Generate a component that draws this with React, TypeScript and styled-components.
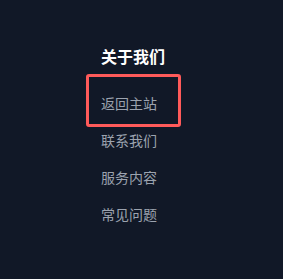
import React from 'react';
import styled, { createGlobalStyle } from 'styled-components';

const GlobalStyle = createGlobalStyle`
  html, body {
    margin: 0;
    padding: 0;
    background: #111827;
  }
  body {
    font-family: "Noto Sans CJK SC", "Noto Sans", sans-serif;
  }
`;

const Page = styled.div`
  min-height: 279px;
  background: #111827;
  padding: 44px 0 0 101px;
  box-sizing: border-box;
`;

const Column = styled.section`
  display: flex;
  flex-direction: column;
`;

const Title = styled.h3`
  margin: 0;
  font-size: 16px;
  line-height: 24px;
  font-weight: 700;
  color: #ffffff;
`;

const List = styled.ul`
  list-style: none;
  margin: 16px 0 0;
  padding: 0;
`;

const Item = styled.li`
  position: relative;
  height: 37px;
  line-height: 37px;
`;

const Link = styled.a`
  font-size: 14px;
  color: #9ca3af;
  text-decoration: none;
`;

const Highlight = styled.span`
  position: absolute;
  left: -15px;
  top: -10px;
  width: 95px;
  height: 53px;
  box-sizing: border-box;
  border: 3px solid #ff5a5a;
  border-radius: 3px;
  pointer-events: none;
`;

const links = ['返回主站', '联系我们', '服务内容', '常见问题'];

const App = () => {
  return (
    <>
      <GlobalStyle />
      <Page>
        <Column>
          <Title>关于我们</Title>
          <List>
            {links.map((label, i) => (
              <Item key={label}>
                <Link href="#">{label}</Link>
                {i === 0 && <Highlight />}
              </Item>
            ))}
          </List>
        </Column>
      </Page>
    </>
  );
};

export default App;
